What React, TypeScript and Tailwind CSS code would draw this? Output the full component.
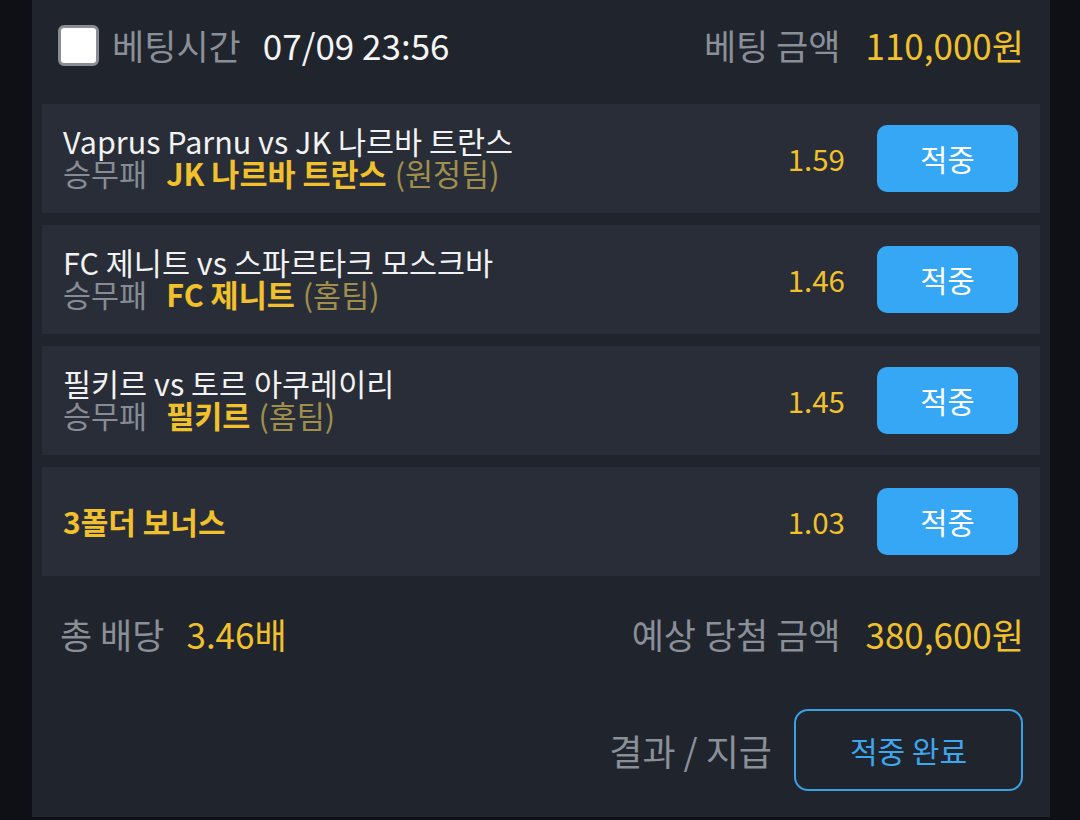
import React from 'react'

type Pick = {
  title?: string
  team: string
  side?: string
  odds: string
}

const picks: Pick[] = [
  { title: 'Vaprus Parnu vs JK 나르바 트란스', team: 'JK 나르바 트란스', side: '(원정팀)', odds: '1.59' },
  { title: 'FC 제니트 vs 스파르타크 모스크바', team: 'FC 제니트', side: '(홈팀)', odds: '1.46' },
  { title: '필키르 vs 토르 아쿠레이리', team: '필키르', side: '(홈팀)', odds: '1.45' },
  { team: '3폴더 보너스', odds: '1.03' },
]

function PickRow({ pick }: { pick: Pick }) {
  return (
    <div className="h-[109px] bg-[#282d37] flex items-center pl-[21px] pr-[22px]">
      <div className="flex-1 min-w-0">
        {pick.title ? (
          <>
            <p className="text-[30.5px] leading-[32px] text-[#f2f2f2] -mt-[3px]">{pick.title}</p>
            <p className="text-[30.5px] leading-[32px] text-[#878b94]">
              승무패
              <span className="ml-[19px] font-bold text-[#f0c12c]">{pick.team}</span>
              <span className="ml-[8px] text-[#a08f4c]">{pick.side}</span>
            </p>
          </>
        ) : (
          <p className="text-[30px] font-bold text-[#f0c12c]">{pick.team}</p>
        )}
      </div>
      <span className="text-[29.5px] text-[#f0c12c] mr-[32px]">{pick.odds}</span>
      <button className="w-[141px] h-[67px] rounded-[10px] bg-[#36a7f5] text-white text-[29.5px]">적중</button>
    </div>
  )
}

export default function App() {
  return (
    <div
      className="w-[1080px] h-[820px] bg-[#0e1016] flex overflow-hidden"
      style={{ fontFamily: '"Noto Sans CJK KR", "Noto Sans", sans-serif' }}
    >
      <div className="ml-[32px] w-[1018px] h-[817px] bg-[#20242d] px-[10px] flex flex-col">
        {/* header */}
        <div className="h-[104px] flex items-center pl-[16px] pr-[16px] pb-[14px]">
          <div className="w-[41px] h-[41px] rounded-[6px] bg-white border-[3px] border-[#8a8d94]" />
          <span className="ml-[13px] text-[35px] text-[#8b8f98]">베팅시간</span>
          <span className="ml-[22px] text-[35px] text-[#f4f4f4]">07/09 23:56</span>
          <span className="ml-auto text-[35px] text-[#8b8f98]">베팅 금액</span>
          <span className="ml-[25px] text-[35px] text-[#f0c12c]">110,000원</span>
        </div>

        <div className="flex flex-col gap-[12px]">
          {picks.map((p, i) => (
            <PickRow key={i} pick={p} />
          ))}
        </div>

        {/* totals */}
        <div className="h-[116px] flex items-center pl-[18px] pr-[16px]">
          <span className="text-[35px] text-[#8b8f98]">총 배당</span>
          <span className="ml-[22px] text-[35px] text-[#f0c12c]">3.46배</span>
          <span className="ml-auto text-[35px] text-[#8b8f98]">예상 당첨 금액</span>
          <span className="ml-[25px] text-[35px] text-[#f0c12c]">380,600원</span>
        </div>

        {/* result */}
        <div className="mt-[17px] flex items-center justify-end pr-[17px]">
          <span className="text-[36px] text-[#8b8f98]">결과 / 지급</span>
          <button className="ml-[22px] w-[229px] h-[82px] rounded-[14px] border-2 border-[#3b9fe2] text-[#3ea6ee] text-[30px]">
            적중 완료
          </button>
        </div>
      </div>
    </div>
  )
}
